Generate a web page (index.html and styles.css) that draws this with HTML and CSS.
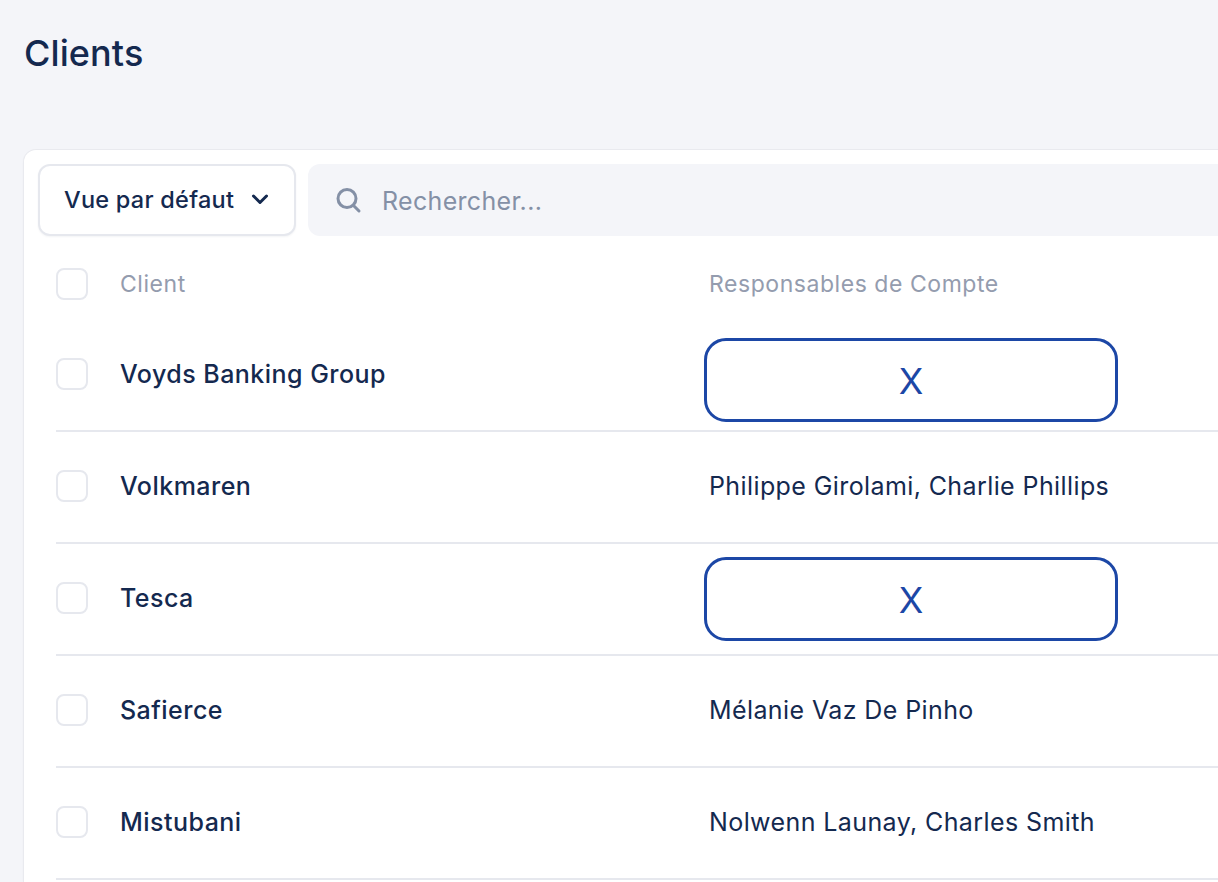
FILE: index.html
```html
<!DOCTYPE html>
<html lang="fr">
<head>
<meta charset="utf-8">
<title>Clients</title>
<link rel="stylesheet" href="styles.css">
</head>
<body>
<main class="page">
  <h1 class="title">Clients</h1>
  <section class="card">
    <div class="toolbar">
      <button class="view-btn">
        <span>Vue par défaut</span>
        <svg class="chevron" width="24" height="24" viewBox="0 0 24 24" fill="none"><path d="M5.500 9 12 15.500 18.500 9" stroke="#14294f" stroke-width="3" stroke-linecap="round" stroke-linejoin="round"/></svg>
      </button>
      <div class="search">
        <svg class="search-icon" width="28" height="28" viewBox="0 0 28 28" fill="none"><circle cx="13" cy="12.500" r="9" stroke="#8490a6" stroke-width="3"/><path d="m19.500 19.500 5.500 5.500" stroke="#8490a6" stroke-width="3" stroke-linecap="round"/></svg>
        <span class="placeholder">Rechercher...</span>
      </div>
    </div>
    <div class="table">
      <div class="row head">
        <span class="check"></span>
        <span class="cell-client">Client</span>
        <span class="cell-owner">Responsables de Compte</span>
      </div>
      <div class="row">
        <span class="check"></span>
        <span class="cell-client name">Voyds Banking Group</span>
        <span class="cell-owner"><span class="redact redact-low">X</span></span>
      </div>
      <div class="row">
        <span class="check"></span>
        <span class="cell-client name">Volkmaren</span>
        <span class="cell-owner">Philippe Girolami, Charlie Phillips</span>
      </div>
      <div class="row">
        <span class="check"></span>
        <span class="cell-client name">Tesca</span>
        <span class="cell-owner"><span class="redact redact-high">X</span></span>
      </div>
      <div class="row">
        <span class="check"></span>
        <span class="cell-client name">Safierce</span>
        <span class="cell-owner">Mélanie Vaz De Pinho</span>
      </div>
      <div class="row">
        <span class="check"></span>
        <span class="cell-client name">Mistubani</span>
        <span class="cell-owner">Nolwenn Launay, Charles Smith</span>
      </div>
    </div>
  </section>
</main>
</body>
</html>
```
FILE: styles.css
```css
* { box-sizing: border-box; }
html, body { margin: 0; height: 100%; overflow: hidden; }
body {
  background: #f4f5f9;
  color: #14294f;
  font-family: Inter, "Liberation Sans", sans-serif;
}
.page { width: 1218px; height: 882px; overflow: hidden; padding: 31px 0 0 24px; }
.title {
  margin: 0 0 75px;
  font-size: 36px;
  line-height: 44px;
  font-weight: 500;
  letter-spacing: .1px;
}
.card {
  background: #fff;
  border-radius: 12px 0 0 0;
  box-shadow: 0 0 0 1px #e9eaef, 0 1px 3px rgba(18,40,76,.06);
  padding: 14px 0 0 15px;
  height: 732px;
}
.toolbar { display: flex; gap: 12px; height: 72px; margin: 0 -20px 0 -1px; }
.view-btn {
  width: 258px;
  height: 72px;
  flex: none;
  display: flex;
  align-items: center;
  justify-content: space-between;
  padding: 0 22px 2px 24px;
  background: #fff;
  border: 2px solid #e6e8ee;
  border-radius: 12px;
  font: 500 23.500px Inter, sans-serif;
  letter-spacing: .25px;
  color: #14294f;
  box-shadow: 0 1px 2px rgba(18,40,76,.05);
}
.search {
  flex: 1;
  display: flex;
  align-items: center;
  gap: 20px;
  padding-left: 26px;
  background: #f4f5f9;
  border-radius: 12px;
  font-size: 25px;
  letter-spacing: .32px;
  color: #8490a6;
}
.placeholder { padding-top: 2px; }
.table { padding: 0 0 0 17px; }
.row {
  display: flex;
  align-items: center;
  height: 112px;
  padding-bottom: 2px;
  border-bottom: 2px solid #e6e8ee;
  font-size: 25px;
  letter-spacing: .4px;
}
.head {
  height: 84px;
  border-bottom: none;
  color: #949cae;
  font-size: 23px;
  letter-spacing: .55px;
  padding: 11px 0 0;
}
.check {
  width: 32px;
  height: 32px;
  flex: none;
  background: #fff;
  border: 2px solid #e6e8ee;
  border-radius: 8px;
}
.cell-client { width: 589px; margin-left: 32px; flex: none; }
.name { font-weight: 500; letter-spacing: .47px; }
.cell-owner { display: flex; }
.redact {
  display: flex;
  align-items: center;
  justify-content: center;
  width: 414px;
  height: 84px;
  margin-left: -5px;
  padding-top: 2px;
  border: 3px solid #1c47a6;
  border-radius: 22px;
  color: #1c47a6;
  font-size: 36px;
  letter-spacing: 0;
}
.redact-low { margin-top: 12px; }
.redact-high { margin-top: 2px; }
```
